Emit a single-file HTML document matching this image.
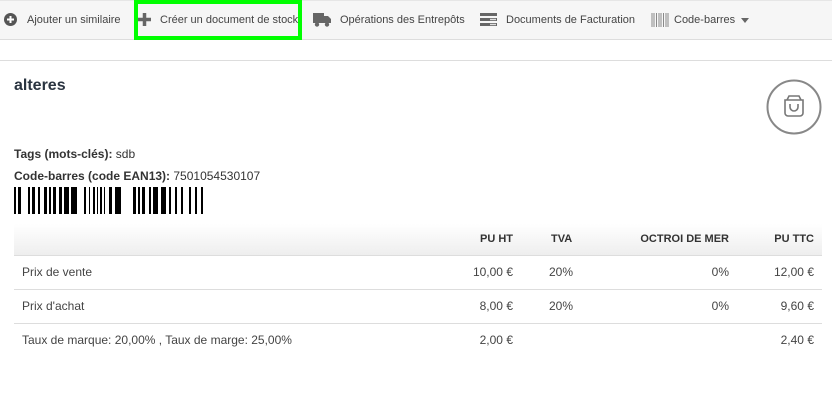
<!DOCTYPE html>
<html><head><meta charset="utf-8"><style>
*{margin:0;padding:0;box-sizing:border-box}
body{width:832px;height:407px;background:#fff;font-family:"Liberation Sans",Arial,sans-serif;color:#333;position:relative;overflow:hidden}
.nav{position:absolute;left:0;top:0;width:832px;height:40px;background:#f6f6f6;border-bottom:1px solid #ddd;border-top:1px solid #e6e6e6}
.it{position:absolute;top:0;height:39px;line-height:39px;font-size:11px;color:#444;white-space:nowrap}
.it svg{position:absolute;top:12px}
.green{position:absolute;left:134px;top:0;width:168px;height:40px;border:4px solid #00ff00}
.panel{position:absolute;left:0;top:60px;width:832px;height:347px;border-top:1px solid #ddd}
.t{position:absolute;font-size:12px;white-space:nowrap}
.b{font-weight:bold}
table{position:absolute;left:14px;top:224px;width:808px;border-collapse:collapse;font-size:12px;color:#444;table-layout:fixed}
th{height:31px;background:linear-gradient(#fff,#eee);font-weight:bold;text-align:right;font-size:11px;color:#333;padding:0 8px}
td{height:34px;border-top:1px solid #ddd;padding:0 8px;text-align:right}
td.l,th.l{text-align:left}
</style></head><body>
<div class="nav">
 <div class="it" style="left:4px"><svg width="13" height="13" viewBox="0 0 13 13"><circle cx="6.5" cy="6.5" r="6.5" fill="#555"/><path d="M6.5 3v7M3 6.5h7" stroke="#fff" stroke-width="2"/></svg><span style="margin-left:23px">Ajouter un similaire</span></div>
 <div class="it" style="left:138px"><svg width="13" height="13" viewBox="0 0 13 13"><path d="M6.5 0v13M0 6.5h13" stroke="#666" stroke-width="3.5"/></svg><span style="margin-left:22px">Créer un document de stock</span></div>
 <div class="it" style="left:313px"><svg width="18" height="14" viewBox="0 0 18 14"><rect x="0" y="0" width="11" height="10" fill="#666"/><path d="M11 3h4l3 3v4h-7z" fill="#666"/><circle cx="4" cy="11.5" r="2.2" fill="#666"/><circle cx="14" cy="11.5" r="2.2" fill="#666"/></svg><span style="margin-left:27px">Opérations des Entrepôts</span></div>
 <div class="it" style="left:480px"><svg width="17" height="14" viewBox="0 0 17 14"><rect y="0" width="17" height="3" fill="#666"/><rect y="5" width="17" height="3" fill="#666"/><rect y="10" width="17" height="3" fill="#666"/><rect x="10" y="5.8" width="6" height="1.4" fill="#ddd"/><rect x="10" y="10.8" width="6" height="1.4" fill="#ddd"/></svg><span style="margin-left:26px">Documents de Facturation</span></div>
 <div class="it" style="left:651px"><svg width="18" height="14" viewBox="0 0 18 14"><path d="M1 0v14M3 0v14M5.5 0v14M8 0v14M10 0v14M12.5 0v14M15 0v14M17 0v14" stroke="#888" stroke-width="1"/></svg><span style="margin-left:23px">Code-barres</span><span style="display:inline-block;margin-left:6px;border-left:4px solid transparent;border-right:4px solid transparent;border-top:5px solid #666;vertical-align:middle"></span></div>
</div>
<div class="green"></div>
<div class="panel"></div>
<div class="t b" style="left:14px;top:77px;font-size:16px;color:#2a3440">alteres</div>
<svg style="position:absolute;left:766px;top:79px" width="56" height="56" viewBox="0 0 56 56"><circle cx="28" cy="28" r="26.5" fill="#fff" stroke="#888" stroke-width="2"/><path d="M19 21h18v13a3 3 0 0 1-3 3H22a3 3 0 0 1-3-3z" fill="none" stroke="#777" stroke-width="1.6"/><path d="M21 21l2-4h10l2 4" fill="none" stroke="#777" stroke-width="1.6"/><path d="M24 25v3a4 4 0 0 0 8 0v-3" fill="none" stroke="#777" stroke-width="1.6"/></svg>
<div class="t" style="left:14px;top:147px"><b>Tags (mots-clés):</b> sdb</div>
<div class="t" style="left:14px;top:169px"><b>Code-barres (code EAN13):</b> 7501054530107</div>
<svg style="position:absolute;left:0;top:187px" width="220" height="28"><g fill="#000">
<rect x="14" width="2" height="27"/><rect x="18" width="3" height="27"/><rect x="28" width="2" height="27"/><rect x="32" width="3" height="27"/><rect x="38" width="2" height="27"/><rect x="44" width="3" height="27"/><rect x="49" width="2" height="27"/><rect x="53" width="3" height="27"/><rect x="59" width="3" height="27"/><rect x="64" width="5" height="27"/><rect x="71" width="6" height="27"/><rect x="84" width="2" height="27"/><rect x="89" width="1" height="27"/><rect x="93" width="2" height="27"/><rect x="97" width="1" height="27"/><rect x="100" width="2" height="27"/><rect x="104" width="1" height="27"/><rect x="109" width="3" height="27"/><rect x="115" width="6" height="27"/><rect x="133" width="3" height="27"/><rect x="138" width="2" height="27"/><rect x="142" width="3" height="27"/><rect x="149" width="2" height="27"/><rect x="153" width="5" height="27"/><rect x="161" width="5" height="27"/><rect x="169" width="2" height="27"/><rect x="175" width="2" height="27"/><rect x="181" width="2" height="27"/><rect x="189" width="2" height="27"/><rect x="195" width="2" height="27"/><rect x="201" width="2" height="27"/>
</g></svg>
<table>
<colgroup><col style="width:417px"><col style="width:90px"><col style="width:70px"><col style="width:146px"><col style="width:85px"></colgroup>
<tr><th class="l"></th><th>PU HT</th><th class="l" style="padding-left:30px">TVA</th><th>OCTROI DE MER</th><th>PU TTC</th></tr>
<tr><td class="l">Prix de vente</td><td>10,00 €</td><td class="l" style="padding-left:28px">20%</td><td>0%</td><td>12,00 €</td></tr>
<tr><td class="l">Prix d'achat</td><td>8,00 €</td><td class="l" style="padding-left:28px">20%</td><td>0%</td><td>9,60 €</td></tr>
<tr><td class="l">Taux de marque: 20,00% , Taux de marge: 25,00%</td><td>2,00 €</td><td></td><td></td><td>2,40 €</td></tr>
</table>
</body></html>
